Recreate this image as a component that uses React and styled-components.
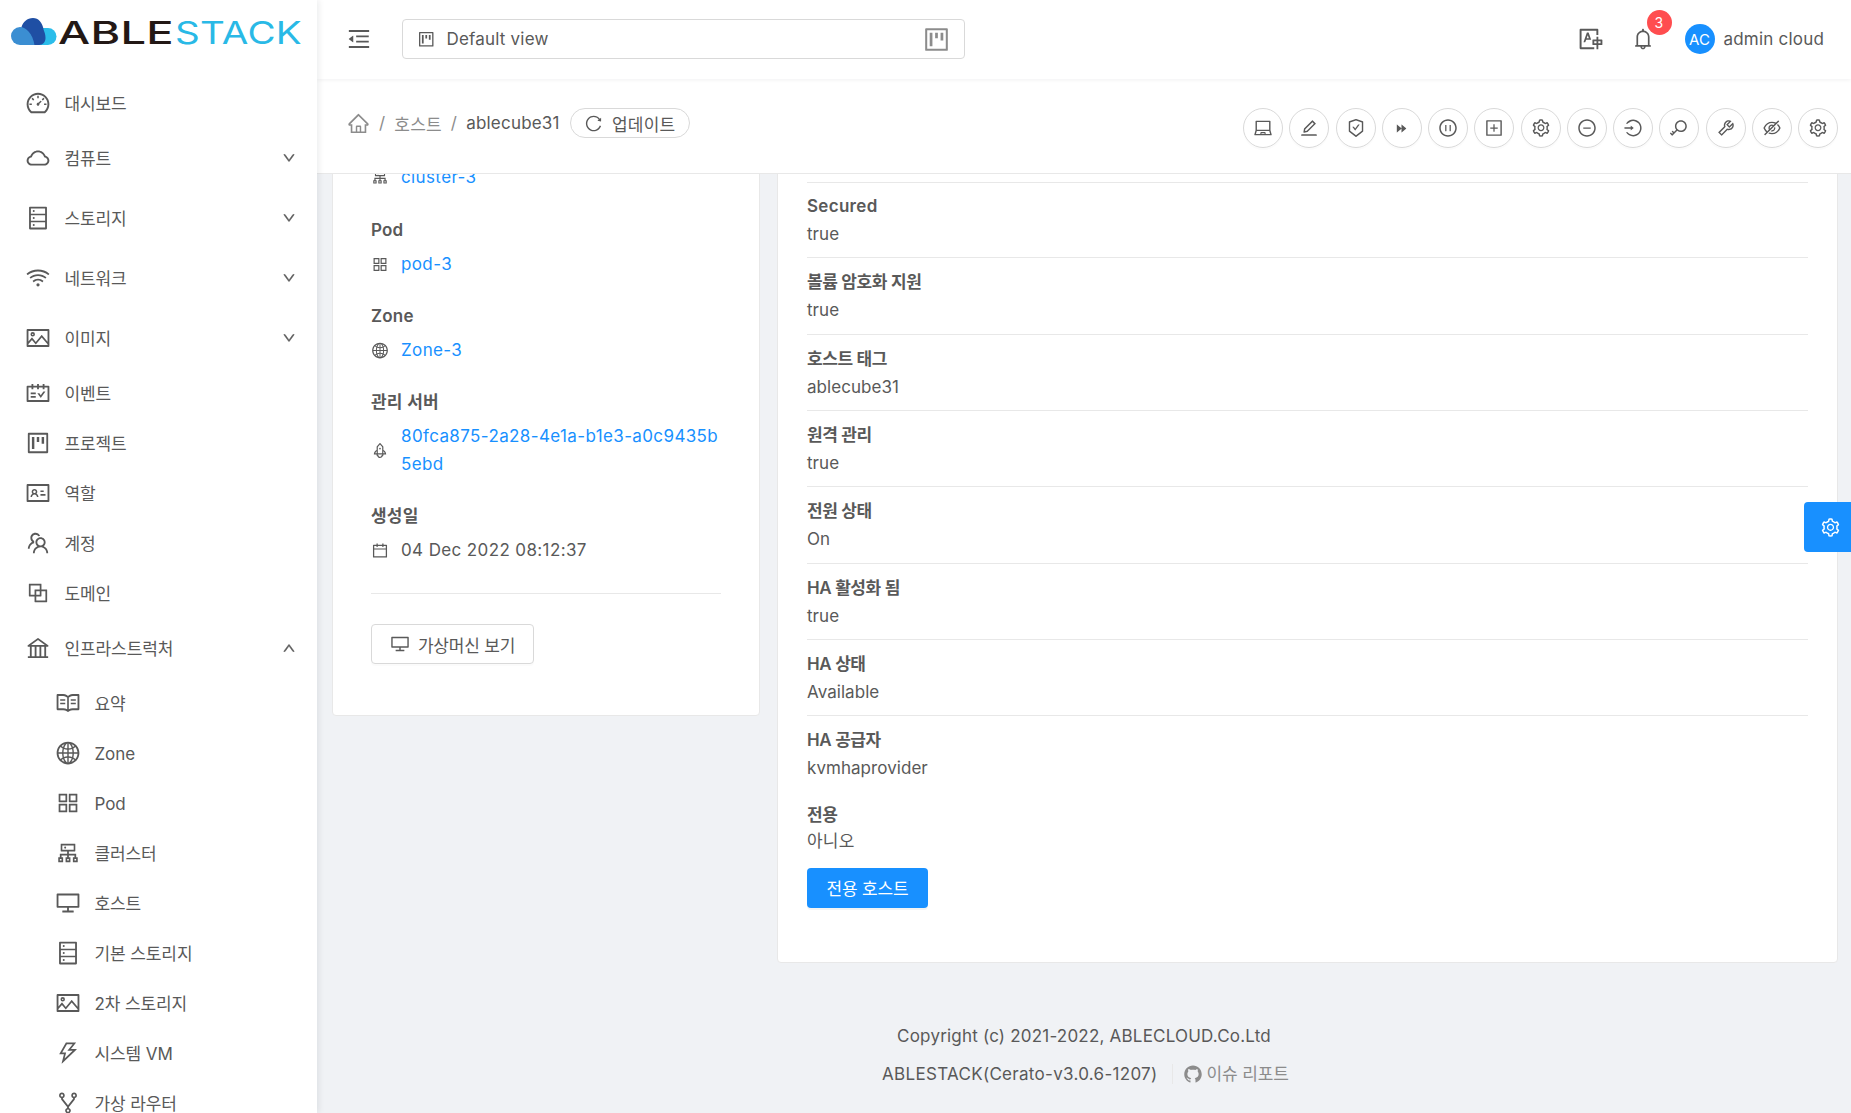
import styled, { createGlobalStyle } from "styled-components";
import {
  AiOutlineDashboard, AiOutlineCloud, AiOutlineDatabase, AiOutlineWifi, AiOutlinePicture,
  AiOutlineSchedule, AiOutlineProject, AiOutlineIdcard, AiOutlineTeam, AiOutlineBlock,
  AiOutlineBank, AiOutlineRead, AiOutlineGlobal, AiOutlineAppstore, AiOutlineCluster,
  AiOutlineDesktop, AiOutlineThunderbolt, AiOutlineFork, AiOutlineDown, AiOutlineUp,
  AiOutlineMenuFold, AiOutlineTranslation, AiOutlineBell, AiOutlineHome, AiOutlineReload,
  AiOutlineLaptop, AiOutlineEdit, AiOutlineSafetyCertificate, AiFillForward,
  AiOutlinePauseCircle, AiOutlinePlusSquare, AiOutlineSetting, AiOutlineMinusCircle,
  AiOutlineLogin, AiOutlineKey, AiOutlineTool, AiOutlineEyeInvisible, AiOutlineRocket,
  AiOutlineCalendar, AiFillGithub,
} from "react-icons/ai";

const GlobalStyle = createGlobalStyle`
  html, body {
    margin: 0;
    height: 100%;
    overflow: hidden;
    background: #f0f2f5;
    font-family: Inter, "Noto Sans CJK KR", sans-serif;
    font-size: 17px;
    letter-spacing: 0.2px;
    color: #595959;
  }
  * { box-sizing: border-box; }
`;

const Shell = styled.div`
  display: flex;
  height: 100vh;
  overflow: hidden;
`;

const Sidebar = styled.aside`
  width: 317px;
  flex: none;
  background: #fff;
  box-shadow: 2px 0 6px rgba(0, 21, 41, 0.08);
  overflow: hidden;
  z-index: 3;
`;
const LogoBar = styled.div`
  height: 78px;
  padding: 17px 0 0 11px;
`;
const LogoSvg = styled.svg`
  display: block;
  overflow: visible;
`;
const NavRow = styled.div`
  height: ${(p) => (p.$tall ? 60 : 50)}px;
  padding: 0 21px 0 ${(p) => (p.$sub ? 55 : 25)}px;
  display: flex;
  align-items: center;
  gap: 13.5px;
  line-height: 24px;
`;
const NavLabel = styled.span`
  padding-top: 1px;
  letter-spacing: -0.1px;
`;
const NavChevron = styled.span`
  margin-left: auto;
  display: flex;
  color: #595959;
`;

const Main = styled.div`
  flex: 1;
  min-width: 0;
  display: flex;
  flex-direction: column;
  position: relative;
`;

const Header = styled.header`
  height: 79px;
  flex: none;
  background: #fff;
  box-shadow: 0 1px 4px rgba(0, 21, 41, 0.06);
  display: flex;
  align-items: center;
  padding: 0 27px 1px 29px;
  z-index: 2;
`;
const ViewSelect = styled.div`
  width: 563px;
  height: 40px;
  margin-left: 30px;
  border: 1px solid #d9d9d9;
  border-radius: 4px;
  display: flex;
  align-items: center;
  padding: 0 13px 0 14px;
  gap: 11px;
`;
const SelectSuffix = styled.span`
  margin-left: auto;
  display: flex;
  color: #8c8c8c;
`;
const HeaderRight = styled.div`
  margin-left: auto;
  display: flex;
  align-items: center;
`;
const BellWrap = styled.span`
  position: relative;
  display: flex;
  margin: 0 30px 0 27px;
`;
const Badge = styled.span`
  position: absolute;
  top: -17px;
  left: 16px;
  width: 25px;
  height: 25px;
  border-radius: 50%;
  background: #ff4d4f;
  color: #fff;
  font-size: 14px;
  display: flex;
  align-items: center;
  justify-content: center;
`;
const Avatar = styled.span`
  width: 30px;
  height: 30px;
  border-radius: 50%;
  background: #1890ff;
  color: #fff;
  display: flex;
  align-items: center;
  justify-content: center;
  font-size: 15px;
  margin-right: 9px;
`;

const CrumbBar = styled.div`
  height: 95px;
  flex: none;
  background: #fff;
  border-bottom: 1px solid #e8e8e8;
  display: flex;
  justify-content: space-between;
  padding: 29px 13px 0 30px;
  z-index: 1;
`;
const Crumbs = styled.div`
  display: flex;
  align-items: center;
  height: 30px;
  gap: 9px;
`;
const CrumbLink = styled.span`
  color: #8c8c8c;
  display: flex;
`;
const RefreshPill = styled.div`
  height: 30px;
  width: 120px;
  margin-left: 1px;
  border: 1px solid #d9d9d9;
  border-radius: 15px;
  display: flex;
  align-items: center;
  justify-content: center;
  gap: 9px;
`;
const Actions = styled.div`
  display: flex;
  gap: 6.25px;
`;
const ActionButton = styled.span`
  width: 40px;
  height: 40px;
  border: 1px solid #d9d9d9;
  border-radius: 50%;
  box-shadow: 0 2px 0 rgba(0, 0, 0, 0.015);
  display: flex;
  align-items: center;
  justify-content: center;
`;

const Scroller = styled.div`
  flex: 1;
  min-height: 0;
  overflow: hidden;
`;
const Columns = styled.div`
  display: flex;
  align-items: flex-start;
  gap: 17px;
  margin-top: -40px;
  padding: 0 13px 0 15px;
`;
const Card = styled.section`
  background: #fff;
  border: 1px solid #e8e8e8;
  border-radius: 4px;
`;
const InfoCard = styled(Card)`
  width: 428px;
  flex: none;
  padding: 28px 38px 51px 38px;
`;
const DetailCard = styled(Card)`
  flex: 1;
  min-width: 0;
  padding: 47px 29px 54px;
`;

const InfoBlock = styled.div`
  margin-bottom: ${(p) => (p.$first ? 25 : 24)}px;
`;
const InfoLabel = styled.div`
  font-weight: 600;
  line-height: 28px;
  margin-bottom: 6px;
`;
const InfoValue = styled.div`
  display: flex;
  align-items: center;
  gap: 12px;
  line-height: 28px;
  letter-spacing: 0.38px;
`;
const InfoIcon = styled.span`
  display: flex;
  flex: none;
  width: 18px;
  justify-content: center;
`;
const Link = styled.a`
  color: #1890ff;
  word-break: break-all;
`;
const Divider = styled.hr`
  border: 0;
  border-top: 1px solid #e8e8e8;
  margin: 29px 0 30px;
`;
const OutlineButton = styled.button`
  font: inherit;
  letter-spacing: -0.2px;
  color: #595959;
  height: 40px;
  width: 163px;
  background: #fff;
  border: 1px solid #d9d9d9;
  border-radius: 4px;
  box-shadow: 0 2px 0 rgba(0, 0, 0, 0.015);
  display: flex;
  align-items: center;
  justify-content: center;
  gap: 8px;
  padding: 0;
`;

const DetailList = styled.div`
  border-top: 1px solid #e8e8e8;
`;
const DetailRow = styled.div`
  padding: 10px 0 9.33px;
  line-height: 28px;
  letter-spacing: 0.05px;
  border-bottom: ${(p) => (p.$plain ? "none" : "1px solid #e8e8e8")};
  &:first-child {
    padding-top: 9px;
  }
`;
const DetailLabel = styled.div`
  font-weight: 600;
  letter-spacing: ${(p) => (p.$ko ? "-0.4px" : "0.3px")};
`;
const LastRow = styled.div`
  margin-top: 10px;
  line-height: 26px;
`;
const PrimaryButton = styled.button`
  font: inherit;
  letter-spacing: -0.2px;
  height: 40px;
  width: 121px;
  margin-top: 14px;
  background: #1890ff;
  color: #fff;
  border: 0;
  border-radius: 4px;
  box-shadow: 0 2px 0 rgba(0, 0, 0, 0.045);
  padding: 0;
  display: block;
`;

const Footer = styled.footer`
  margin-top: 59px;
  text-align: center;
  line-height: 28px;
`;
const FooterLine = styled.div`
  margin-bottom: 10px;
  padding-left: ${(p) => (p.$shift ? 3 : 0)}px;
  letter-spacing: ${(p) => (p.$shift ? 0.3 : 0.2)}px;
  display: flex;
  justify-content: center;
  align-items: center;
`;
const IssueLink = styled.span`
  color: #8c8c8c;
  display: flex;
  align-items: center;
  gap: 4px;
  margin-left: 14px;
  padding-left: 10px;
  border-left: 1px solid #e8e8e8;
  line-height: 20px;
  letter-spacing: -0.1px;
`;

const SettingsTab = styled.div`
  position: absolute;
  right: 0;
  top: 502px;
  width: 47px;
  height: 50px;
  padding-left: 5px;
  background: #1890ff;
  border-radius: 4px 0 0 4px;
  color: #fff;
  display: flex;
  align-items: center;
  justify-content: center;
  z-index: 4;
`;

const navItems = [
  { icon: AiOutlineDashboard, label: "대시보드" },
  { icon: AiOutlineCloud, label: "컴퓨트", arrow: "down" },
  { icon: AiOutlineDatabase, label: "스토리지", arrow: "down" },
  { icon: AiOutlineWifi, label: "네트워크", arrow: "down" },
  { icon: AiOutlinePicture, label: "이미지", arrow: "down" },
  { icon: AiOutlineSchedule, label: "이벤트" },
  { icon: AiOutlineProject, label: "프로젝트" },
  { icon: AiOutlineIdcard, label: "역할" },
  { icon: AiOutlineTeam, label: "계정" },
  { icon: AiOutlineBlock, label: "도메인" },
  { icon: AiOutlineBank, label: "인프라스트럭처", arrow: "up" },
  { icon: AiOutlineRead, label: "요약", sub: true },
  { icon: AiOutlineGlobal, label: "Zone", sub: true },
  { icon: AiOutlineAppstore, label: "Pod", sub: true },
  { icon: AiOutlineCluster, label: "클러스터", sub: true },
  { icon: AiOutlineDesktop, label: "호스트", sub: true },
  { icon: AiOutlineDatabase, label: "기본 스토리지", sub: true },
  { icon: AiOutlinePicture, label: "2차 스토리지", sub: true },
  { icon: AiOutlineThunderbolt, label: "시스템 VM", sub: true },
  { icon: AiOutlineFork, label: "가상 라우터", sub: true },
];

const actionIcons = [
  { icon: AiOutlineLaptop },
  { icon: AiOutlineEdit },
  { icon: AiOutlineSafetyCertificate },
  { icon: AiFillForward, size: 15 },
  { icon: AiOutlinePauseCircle },
  { icon: AiOutlinePlusSquare },
  { icon: AiOutlineSetting },
  { icon: AiOutlineMinusCircle },
  { icon: AiOutlineLogin },
  { icon: AiOutlineKey },
  { icon: AiOutlineTool },
  { icon: AiOutlineEyeInvisible },
  { icon: AiOutlineSetting },
];

const infoItems = [
  { label: "Pod", icon: AiOutlineAppstore, value: "pod-3", link: true },
  { label: "Zone", icon: AiOutlineGlobal, value: "Zone-3", link: true },
  { label: "관리 서버", icon: AiOutlineRocket, value: "80fca875-2a28-4e1a-b1e3-a0c9435b5ebd", link: true },
  { label: "생성일", icon: AiOutlineCalendar, value: "04 Dec 2022 08:12:37" },
];

const details = [
  ["Secured", "true"],
  ["볼륨 암호화 지원", "true"],
  ["호스트 태그", "ablecube31"],
  ["원격 관리", "true"],
  ["전원 상태", "On"],
  ["HA 활성화 됨", "true"],
  ["HA 상태", "Available"],
  ["HA 공급자", "kvmhaprovider"],
];

function Logo() {
  return (
    <LogoSvg width="292" height="30" viewBox="0 0 292 30">
      <path fill="#2bbdea" d="M28 28h9a8.5 8.5 0 0 0 0-17h-9z" />
      <path fill="#1f4fa4" d="M12 28h16c4 0 6.5-3 6.5-7 0-3-.8-5.5-1.8-8C31.5 5.500 27.500 1 22 1c-6 0-10 4-11.500 9z" />
      <path fill="#3b8ed2" d="M9 28a9 9 0 0 1 0-18c6 0 12.500 6.500 14.500 18z" />
      <text x="47" y="27" fontFamily="Inter, sans-serif" fontSize="31" fontWeight="500" fill="#231815" textLength="116" lengthAdjust="spacingAndGlyphs">ABLE</text>
      <text x="164" y="27" fontFamily="Inter, sans-serif" fontSize="31" fontWeight="400" fill="#29b9e6" textLength="127" lengthAdjust="spacingAndGlyphs">STACK</text>
    </LogoSvg>
  );
}

export default function App() {
  return (
    <Shell>
      <GlobalStyle />
      <Sidebar>
        <LogoBar>
          <Logo />
        </LogoBar>
        {navItems.map(({ icon: Icon, label, arrow, sub }) => (
          <NavRow key={label} $tall={!!arrow} $sub={sub}>
            <Icon size={26} />
            <NavLabel>{label}</NavLabel>
            {arrow && (
              <NavChevron>
                {arrow === "down" ? (
                  <AiOutlineDown size={14} stroke="currentColor" strokeWidth={40} />
                ) : (
                  <AiOutlineUp size={14} stroke="currentColor" strokeWidth={40} />
                )}
              </NavChevron>
            )}
          </NavRow>
        ))}
      </Sidebar>

      <Main>
        <Header>
          <AiOutlineMenuFold size={26} />
          <ViewSelect>
            <AiOutlineProject size={18.5} />
            <span>Default view</span>
            <SelectSuffix>
              <AiOutlineProject size={29} />
            </SelectSuffix>
          </ViewSelect>
          <HeaderRight>
            <AiOutlineTranslation size={26} />
            <BellWrap>
              <AiOutlineBell size={24} />
              <Badge>3</Badge>
            </BellWrap>
            <Avatar>AC</Avatar>
            <span>admin cloud</span>
          </HeaderRight>
        </Header>

        <CrumbBar>
          <Crumbs>
            <CrumbLink>
              <AiOutlineHome size={23} />
            </CrumbLink>
            <CrumbLink>/</CrumbLink>
            <CrumbLink>호스트</CrumbLink>
            <CrumbLink>/</CrumbLink>
            <span>ablecube31</span>
            <RefreshPill>
              <AiOutlineReload size={19} />
              <span>업데이트</span>
            </RefreshPill>
          </Crumbs>
          <Actions>
            {actionIcons.map(({ icon: Icon, size }, i) => (
              <ActionButton key={i}>
                <Icon size={size || 20} />
              </ActionButton>
            ))}
          </Actions>
        </CrumbBar>

        <Scroller>
          <Columns>
            <InfoCard>
              <InfoBlock $first>
                <InfoValue>
                  <InfoIcon>
                    <AiOutlineCluster size={18.5} />
                  </InfoIcon>
                  <Link>cluster-3</Link>
                </InfoValue>
              </InfoBlock>
              {infoItems.map(({ label, icon: Icon, value, link }) => (
                <InfoBlock key={label}>
                  <InfoLabel>{label}</InfoLabel>
                  <InfoValue>
                    <InfoIcon>
                      <Icon size={19} />
                    </InfoIcon>
                    {link ? <Link>{value}</Link> : <span>{value}</span>}
                  </InfoValue>
                </InfoBlock>
              ))}
              <Divider />
              <OutlineButton>
                <AiOutlineDesktop size={20} />
                가상머신 보기
              </OutlineButton>
            </InfoCard>

            <DetailCard>
              <DetailList>
                {details.map(([label, value], i) => (
                  <DetailRow key={label} $plain={i === details.length - 1}>
                    <DetailLabel $ko={/[가-힣]/.test(label)}>{label}</DetailLabel>
                    <div>{value}</div>
                  </DetailRow>
                ))}
              </DetailList>
              <LastRow>
                <DetailLabel $ko>전용</DetailLabel>
                <div>아니오</div>
              </LastRow>
              <PrimaryButton>전용 호스트</PrimaryButton>
            </DetailCard>
          </Columns>

          <Footer>
            <FooterLine>Copyright (c) 2021-2022, ABLECLOUD.Co.Ltd</FooterLine>
            <FooterLine $shift>
              ABLESTACK(Cerato-v3.0.6-1207)
              <IssueLink>
                <AiFillGithub size={20} />
                이슈 리포트
              </IssueLink>
            </FooterLine>
          </Footer>
        </Scroller>

        <SettingsTab>
          <AiOutlineSetting size={21} />
        </SettingsTab>
      </Main>
    </Shell>
  );
}
